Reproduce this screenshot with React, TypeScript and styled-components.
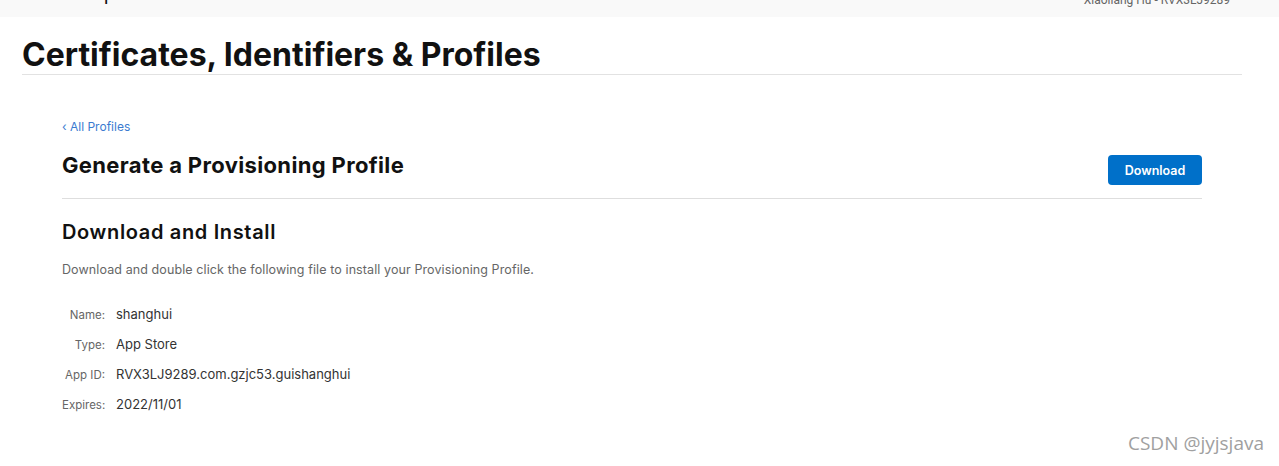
import styled, { createGlobalStyle } from "styled-components";

const GlobalStyle = createGlobalStyle`
	html, body {
		margin: 0;
		padding: 0;
		background: #ffffff;
		font-family: Inter, "Noto Sans", "Liberation Sans", sans-serif;
		-webkit-font-smoothing: antialiased;
	}
`;

const Page = styled.div`
	position: relative;
	width: 1279px;
	height: 466px;
	overflow: hidden;
	background: #ffffff;
`;

const TopBar = styled.div`
	height: 17px;
	background: #f9f9f9;
	display: flex;
	justify-content: space-between;
	align-items: flex-start;
	padding: 0 49px 0 47px;
	overflow: hidden;
	font-family: Roboto, "Liberation Sans", sans-serif;
`;

const TopText = styled.span<{ $brand?: boolean }>`
	margin-top: ${(p) => (p.$brand ? "-17px" : "-7px")};
	font-size: ${(p) => (p.$brand ? "19px" : "12px")};
	line-height: ${(p) => (p.$brand ? "22px" : "14px")};
	color: ${(p) => (p.$brand ? "#111111" : "#666666")};
`;

const Header = styled.header`
	padding: 0 37px 0 22px;
`;

const PageTitle = styled.h1`
	margin: 0;
	padding-top: 19px;
	font-size: 32px;
	line-height: 38px;
	font-weight: 700;
	color: #111111;
	border-bottom: 1px solid #e2e2e2;
`;

const Content = styled.main`
	padding: 40px 77px 0 62px;
`;

const BackLink = styled.a`
	display: inline-block;
	font-size: 12px;
	line-height: 16px;
	color: #3b7bd0;
	text-decoration: none;
`;

const TitleRow = styled.div`
	display: flex;
	justify-content: space-between;
	align-items: flex-start;
	padding: 18px 0 13px;
	border-bottom: 1px solid #dedede;
`;

const SectionTitle = styled.h2`
	margin: 0;
	font-size: 22px;
	line-height: 24px;
	font-weight: 700;
	letter-spacing: 0.35px;
	color: #111111;
`;

const DownloadButton = styled.button`
	margin-top: 2px;
	width: 94px;
	height: 30px;
	border: none;
	border-radius: 4px;
	background: #0070c9;
	color: #ffffff;
	font-family: inherit;
	font-size: 12.5px;
	font-weight: 600;
	cursor: pointer;
`;

const SubTitle = styled.h3`
	margin: 20px 0 0;
	font-size: 20px;
	line-height: 26px;
	font-weight: 600;
	letter-spacing: 0.65px;
	color: #111111;
`;

const Description = styled.p`
	margin: 17px 0 0;
	font-size: 12.5px;
	line-height: 16px;
	letter-spacing: 0.1px;
	color: #666666;
`;

const Details = styled.dl`
	display: grid;
	grid-template-columns: 43px auto;
	column-gap: 11px;
	row-gap: 13px;
	margin: 28px 0 0;
	align-items: baseline;
`;

const Label = styled.dt`
	font-size: 11.5px;
	line-height: 16px;
	color: #666666;
	text-align: right;
`;

const Value = styled.dd`
	margin: 0;
	font-size: 13px;
	line-height: 16px;
	color: #333333;
`;

const Watermark = styled.div`
	position: absolute;
	right: 15px;
	bottom: 10px;
	font-family: "Open Sans", "Noto Sans", sans-serif;
	font-size: 19px;
	color: #a0a0a0;
`;

const details = [
	{ label: "Name:", value: "shanghui" },
	{ label: "Type:", value: "App Store" },
	{ label: "App ID:", value: "RVX3LJ9289.com.gzjc53.guishanghui" },
	{ label: "Expires:", value: "2022/11/01" },
];

function App() {
	return <Page>
		<GlobalStyle />
		<TopBar>
			<TopText $brand>Developer</TopText>
			<TopText>Xiaoliang Hu - RVX3LJ9289</TopText>
		</TopBar>
		<Header>
			<PageTitle>Certificates, Identifiers &amp; Profiles</PageTitle>
		</Header>
		<Content>
			<BackLink href="#">‹ All Profiles</BackLink>
			<TitleRow>
				<SectionTitle>Generate a Provisioning Profile</SectionTitle>
				<DownloadButton>Download</DownloadButton>
			</TitleRow>
			<SubTitle>Download and Install</SubTitle>
			<Description>Download and double click the following file to install your Provisioning Profile.</Description>
			<Details>
				{details.map((d) => [
					<Label key={d.label}>{d.label}</Label>,
					<Value key={d.label + "-value"}>{d.value}</Value>,
				])}
			</Details>
		</Content>
		<Watermark>CSDN @jyjsjava</Watermark>
	</Page>
}

export default App;
